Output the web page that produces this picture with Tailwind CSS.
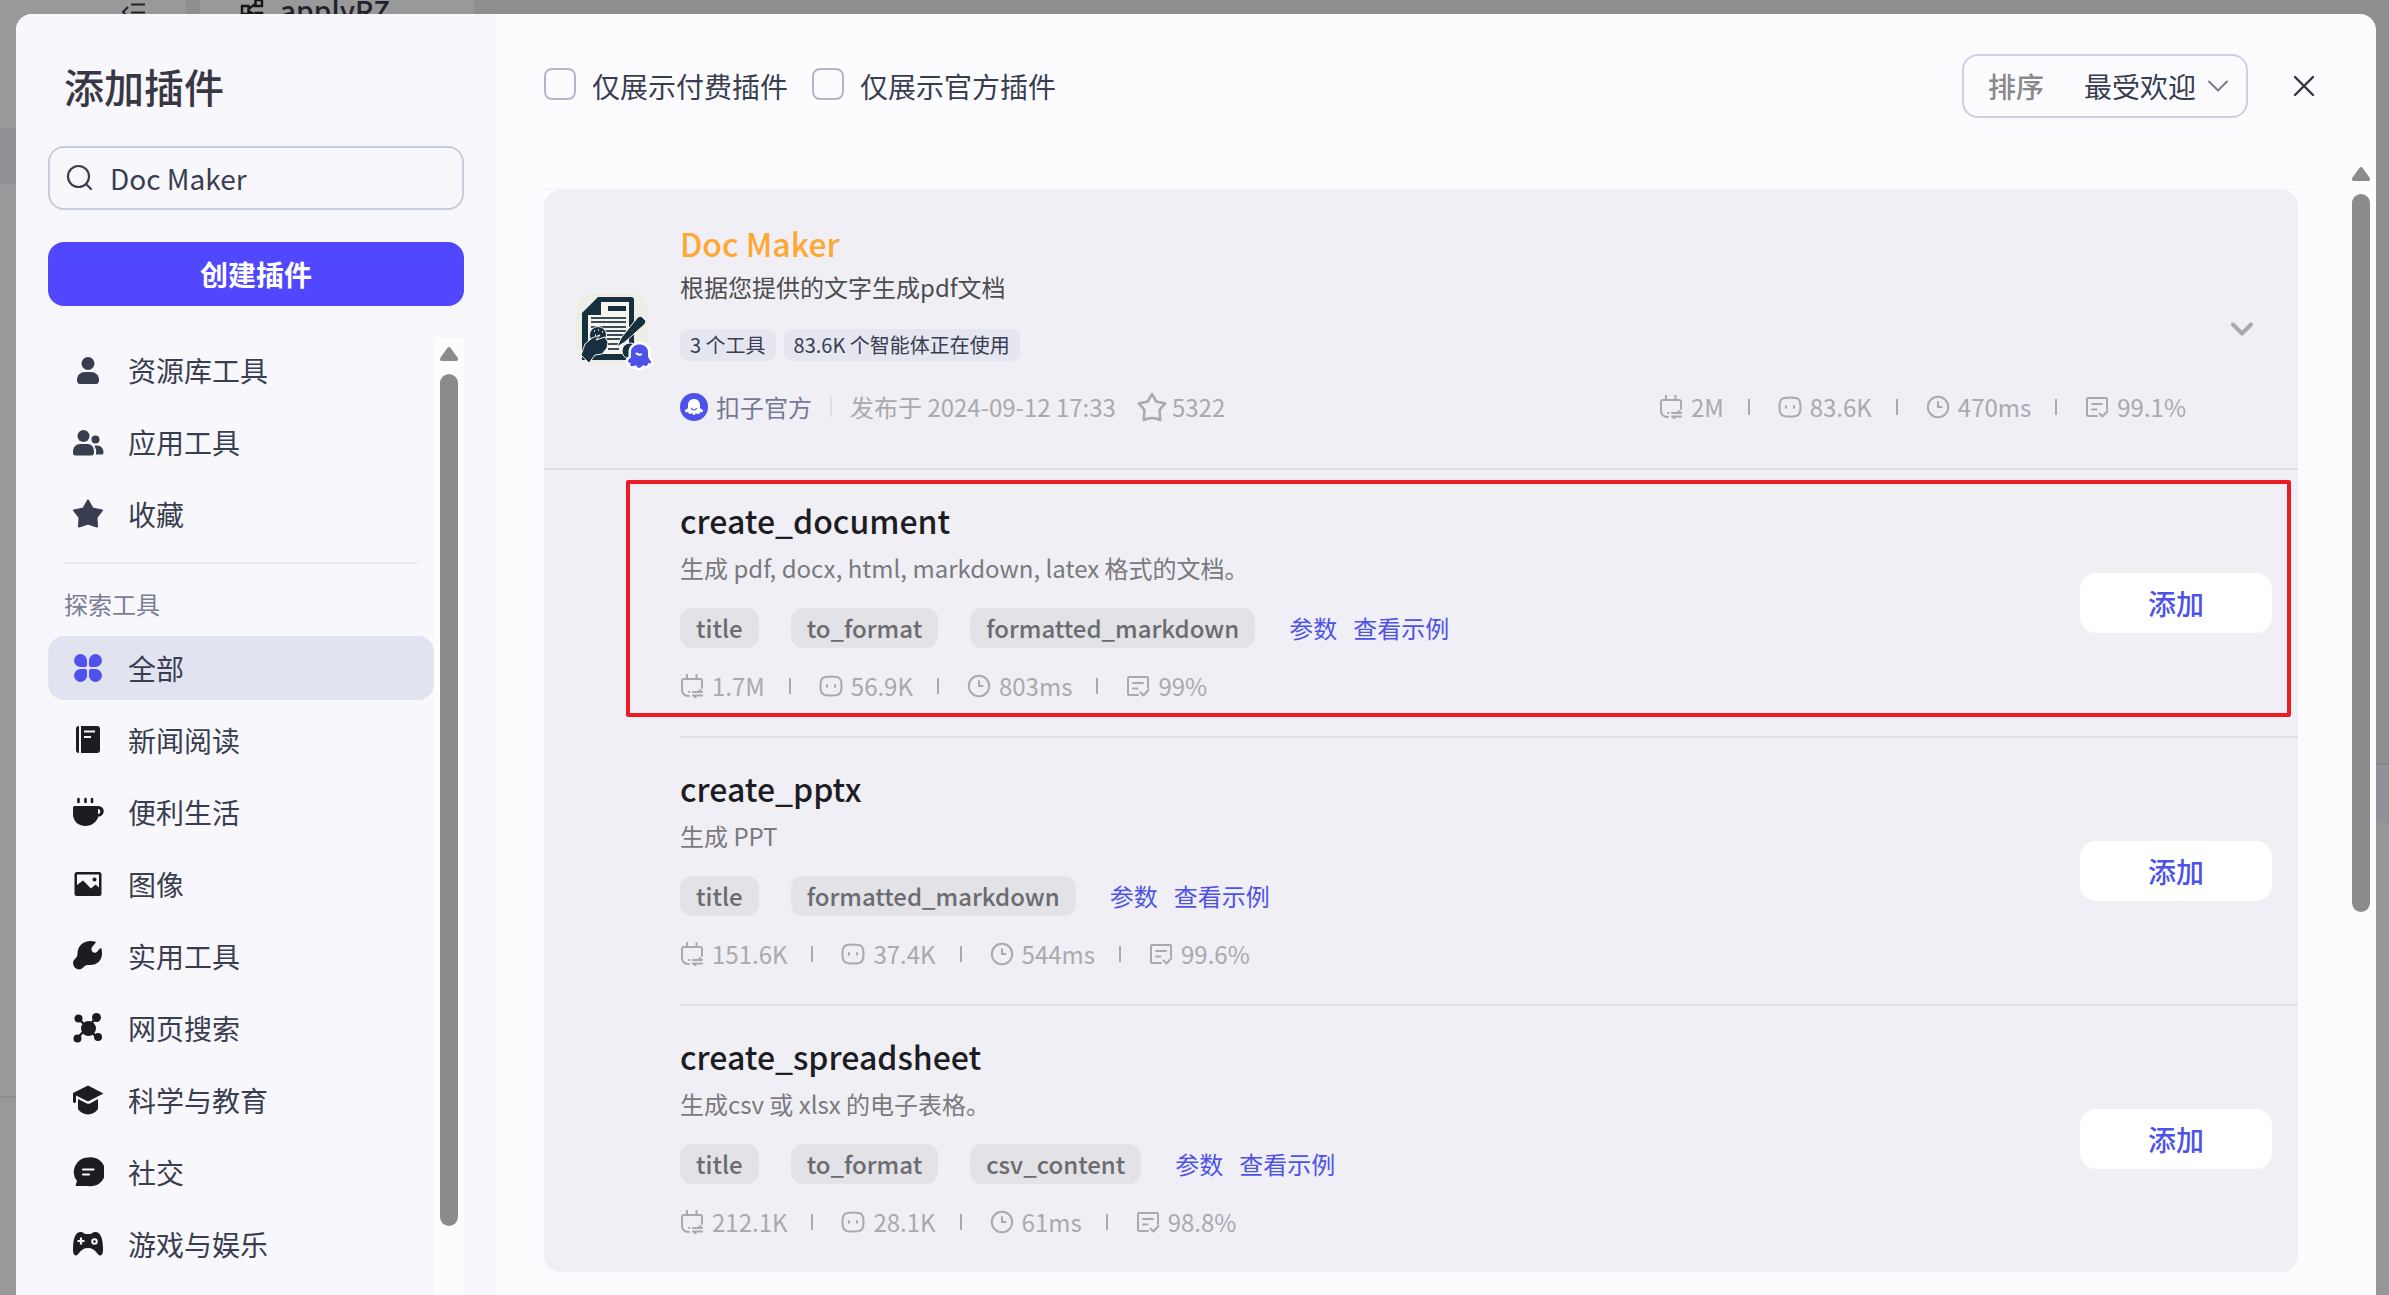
<!DOCTYPE html>
<html lang="zh-CN">
<head>
    <meta charset="UTF-8">
    <meta name="viewport" content="width=device-width, initial-scale=1.0">
    <script src="https://cdn.jsdelivr.net/npm/@tailwindcss/browser@4"></script>
    <title>添加插件</title>
</head>
<body class="relative h-screen overflow-hidden bg-[#8f8f91] font-['Noto_Sans_CJK_SC',sans-serif] text-[28px] text-[#383e50]">

    <!-- Shared icons -->
    <svg class="hidden">
        <symbol id="icon-runs" viewBox="0 0 24 24" fill="none" stroke="currentColor" stroke-width="2" stroke-linecap="round" stroke-linejoin="round">
            <path d="M7 .8V5M16.500 .8V5M9 22H8a6 6 0 0 1-6-6V7a2 2 0 0 1 2-2h16a2 2 0 0 1 2 2v7"/>
            <path d="M9 18h.5M13 18h9l-2.500-2M22 21.500h-9l2.500 1.800"/>
        </symbol>
        <symbol id="icon-bot" viewBox="0 0 24 24" fill="none" stroke="currentColor" stroke-width="2" stroke-linecap="round">
            <path d="M12 2.500c8.500 0 10.500 1.500 10.500 9.500s-2 9.500-10.500 9.500S1.500 20 1.500 12 3.500 2.500 12 2.500zM8 11v1.800M16 11v1.800"/>
        </symbol>
        <symbol id="icon-clock" viewBox="0 0 24 24" fill="none" stroke="currentColor" stroke-width="2" stroke-linecap="round" stroke-linejoin="round">
            <circle cx="12" cy="12" r="10.200"/>
            <path d="M12 7v5h3.500"/>
        </symbol>
        <symbol id="icon-rate" viewBox="0 0 24 24" fill="none" stroke="currentColor" stroke-width="2" stroke-linecap="round" stroke-linejoin="round">
            <path d="M12 21H3a1 1 0 0 1-1-1V4a1 1 0 0 1 1-1h18a1 1 0 0 1 1 1v10M7 9h10M7 14.500h4.500M14.500 18.500l3 3 5-5.500"/>
        </symbol>
        <symbol id="icon-down" viewBox="0 0 24 24" fill="none" stroke="currentColor" stroke-linecap="round" stroke-linejoin="round">
            <path d="M3 7.500l9 9 9-9"/>
        </symbol>
        <symbol id="icon-up" viewBox="0 0 18 14">
            <path fill="currentColor" d="M7.200 1.200q1.800-2.200 3.600 0l6.700 9.300q1.500 3.500-1.500 3.500H2q-3 0-1.500-3.500z"/>
        </symbol>
    </svg>

    <!-- Page behind the dialog -->
    <div class="flex h-full">
        <div class="flex w-[188px] flex-col border-r-2 border-[#8d8e93] bg-[#999]">
            <div class="flex h-32 justify-end pr-10">
                <svg class="h-6 w-6" viewBox="0 0 24 24" fill="none" stroke="#22232b" stroke-width="2"><path d="M9 4.500h14M9 12.500h14M6 7l-5 5 5 5"/></svg>
            </div>
            <div class="h-14 bg-[#8f9095]"></div>
            <div class="h-[914px] border-b-2 border-[#8d8e95]"></div>
        </div>
        <div class="flex-1 pl-3">
            <div class="flex h-5 w-[274px] items-center gap-4 bg-[#999] pl-10">
                <svg class="h-6 w-6" viewBox="0 0 24 24" fill="none" stroke="#15161c" stroke-width="2.400"><path d="M2 8h6.500v8H2zM15.500 2H22v6h-6.500zM15.500 15H22v6h-6.500zM8.500 11l7-5M8.500 13l7 4"/></svg>
                <span class="text-[28px] leading-8 font-medium text-[#20222c]">applyRZ</span>
            </div>
        </div>
        <div class="flex w-4 flex-col">
            <div class="h-[763px]"></div>
            <div class="h-[60px] border-t-2 border-[#84858c] bg-[#91919a]"></div>
            <div class="flex-1 bg-[#97979a]"></div>
        </div>
    </div>

    <!-- Dialog -->
    <div class="absolute top-[14px] right-[13px] bottom-0 left-4 flex overflow-hidden rounded-t-2xl bg-[#fcfcff]">

        <!-- Sidebar -->
        <aside class="flex w-[480px] shrink-0 flex-col bg-[#f8f8fc] px-8 pt-11">
            <h1 class="px-4 text-[40px] leading-14 font-medium text-[#383743]">添加插件</h1>
            <label class="mt-8 flex h-16 items-center gap-4 rounded-2xl border-2 border-[#c8cce0] px-4">
                <svg class="h-7 w-7 shrink-0" viewBox="0 0 28 28" fill="none" stroke="currentColor" stroke-width="2.200" stroke-linecap="round"><circle cx="12.500" cy="12.500" r="10.500"/><path d="M20 20l5 5"/></svg>
                <input type="text" value="Doc Maker" aria-label="搜索插件" class="w-full bg-transparent outline-none">
            </label>
            <button class="mt-8 h-16 shrink-0 rounded-2xl bg-[#5147ff] font-bold text-white">创建插件</button>

            <div class="mt-8 flex min-h-0 flex-1">
                <nav class="flex-1 overflow-hidden">
                    <div class="flex flex-col gap-2">
                        <a href="#" class="flex h-16 items-center gap-6 pl-6">
                            <svg class="h-8 w-8" viewBox="0 0 32 32" fill="currentColor"><circle cx="16" cy="9.500" r="6.500"/><path d="M5 26c0-5 3.500-8 8-8h6c4.500 0 8 3 8 8q0 4-3 4H8q-3 0-3-4z"/></svg>
                            资源库工具
                        </a>
                        <a href="#" class="flex h-16 items-center gap-6 pl-6">
                            <svg class="h-8 w-8" viewBox="0 0 32 32" fill="currentColor"><circle cx="11.500" cy="10" r="6"/><path d="M1 26c0-5 3-8 7-8h7.500c4 0 6.500 3 6.500 8 0 2-.5 3.500-2.500 3.500h-16C1.500 29.500 1 28 1 26z"/><circle cx="23.500" cy="13.500" r="4"/><path d="M23 19.500h2c4 0 6.500 3 6.500 7q0 2-1.500 2h-6q.8-5-1.500-9z"/></svg>
                            应用工具
                        </a>
                        <a href="#" class="flex h-16 items-center gap-6 pl-6">
                            <svg class="h-8 w-8" viewBox="0 0 32 32" fill="currentColor" stroke="currentColor" stroke-width="2" stroke-linejoin="round"><path d="M16 2.500l4.500 8 9.500 2-5.500 7 .5 9-9-3-9 3 .5-9-5.500-7 9.500-2z"/></svg>
                            收藏
                        </a>
                    </div>
                    <div class="mx-4 mt-4 border-t-2 border-[#e8e8ed]"></div>
                    <div class="mt-5 mb-3 px-4 text-2xl leading-10 text-[#7a7d96]">探索工具</div>
                    <div class="flex flex-col gap-2">
                        <a href="#" class="flex h-16 items-center gap-6 rounded-2xl bg-[#e1e4f0] pl-6">
                            <svg class="h-8 w-8" viewBox="0 0 32 32" fill="#4f52ed"><path d="M8.500 2A6.500 6.500 0 0 1 15 8.500V13q0 2-2 2H8.500a6.500 6.500 0 0 1 0-13zM23.500 2a6.500 6.500 0 0 1 0 13H19q-2 0-2-2V8.500A6.500 6.500 0 0 1 23.500 2zM8.500 17H13q2 0 2 2v4.500A6.500 6.500 0 1 1 8.500 17zM19 17h4.500a6.500 6.500 0 1 1-6.500 6.500V19q0-2 2-2z"/></svg>
                            全部
                        </a>
                        <a href="#" class="flex h-16 items-center gap-6 pl-6">
                            <svg class="h-8 w-8" viewBox="0 0 32 32" fill="#1d1c23"><path d="M7 2v27q-3 0-3-3V5q0-3 3-3zM9 2h16q3 0 3 3v21q0 3-3 3H9zM12 6.500v2h11v-2zM12 12v2h7v-2z" fill-rule="evenodd"/></svg>
                            新闻阅读
                        </a>
                        <a href="#" class="flex h-16 items-center gap-6 pl-6">
                            <svg class="h-8 w-8" viewBox="0 0 32 32" fill="#1d1c23"><path d="M6.500 3v3M13.500 3v3M20 3v3" stroke="#1d1c23" stroke-width="2.600" stroke-linecap="round"/><path d="M2.500 10h24a5 5 0 0 1 0 10.500C24.500 26 20 30 13.500 30 6 30 1 25 1 18v-6.500q0-1.500 1.500-1.500zM26 13v5c3 0 3-5 0-5z" fill-rule="evenodd"/></svg>
                            便利生活
                        </a>
                        <a href="#" class="flex h-16 items-center gap-6 pl-6">
                            <svg class="h-8 w-8" viewBox="0 0 32 32" fill="#1d1c23"><path d="M5 4h22q2.500 0 2.500 2.500v19q0 2.500-2.500 2.500H5q-2.500 0-2.500-2.500v-19Q2.500 4 5 4zM5 6.500V17l6-4.500 8 8 4.500-4 3.500 3v-13z" fill-rule="evenodd"/><circle cx="22.500" cy="11.500" r="2"/></svg>
                            图像
                        </a>
                        <a href="#" class="flex h-16 items-center gap-6 pl-6">
                            <svg class="h-8 w-8" viewBox="0 0 32 32" fill="#1d1c23"><path d="M24 2c-8-3-18 1-18.500 11 0 3-.5 4-3 6.500-4 4 1 12 6.500 9.500 3-1.500 3.500-4 7-4 9 1 14-5 14-11 0-2 0-5-1-6-2 .5-3 3.500-5 4.500-2.500 1-5-1.500-4.500-4C20 6 23 4.500 24 2z"/></svg>
                            实用工具
                        </a>
                        <a href="#" class="flex h-16 items-center gap-6 pl-6">
                            <svg class="h-8 w-8" viewBox="0 0 32 32" fill="#1d1c23"><path d="M6.500 6.500l18 18.500M24.500 5.500l-19 20.500" stroke="#1d1c23" stroke-width="2.500"/><circle cx="16.500" cy="16.500" r="7.500"/><circle cx="6.500" cy="6.500" r="4"/><circle cx="24.500" cy="5.500" r="4.500"/><circle cx="5.500" cy="26.500" r="4"/><circle cx="26" cy="25" r="4"/></svg>
                            网页搜索
                        </a>
                        <a href="#" class="flex h-16 items-center gap-6 pl-6">
                            <svg class="h-8 w-8" viewBox="0 0 32 32" fill="#1d1c23"><path d="M16 1.500l15.500 8L17 17q-1 .5-2 0L4 11.500V18q-1.500 2-3 0V9zM6 15l9 4.500q1.500.5 3 0l8-4.500v9.500c0 2-5.500 6-10 6s-10-4-10-6z"/></svg>
                            科学与教育
                        </a>
                        <a href="#" class="flex h-16 items-center gap-6 pl-6">
                            <svg class="h-8 w-8" viewBox="0 0 32 32" fill="#1d1c23"><path d="M16 1.500A14.500 14.500 0 1 1 16 30H5q-2 0-1-2l1-3A14.500 14.500 0 0 1 16 1.500z"/><path d="M11 13.500h10.500M11 18.500h6" stroke="#f8f8fc" stroke-width="2.200" stroke-linecap="round"/></svg>
                            社交
                        </a>
                        <a href="#" class="flex h-16 items-center gap-6 pl-6">
                            <svg class="h-8 w-8" viewBox="0 0 32 32" fill="#1d1c23"><path d="M8 4c3-.5 4 2 6 2h4c2 0 3-2.500 6-2 5 .5 7 8 7 17 0 4-.5 6-2.500 6.500C25 28 24.500 20 16 20S7 28 3.500 27.500C1.500 27 1 25 1 21 1 12 3 4.500 8 4z"/><path d="M9 9.500v7M5.500 13h7" stroke="#f8f8fc" stroke-width="2.200"/><circle cx="22.500" cy="13.500" r="2.300" fill="none" stroke="#f8f8fc" stroke-width="2"/></svg>
                            游戏与娱乐
                        </a>
                    </div>
                </nav>
                <!-- Sidebar scrollbar -->
                <div class="flex w-[30px] flex-col items-center bg-[#fcfcfc] pt-[9px]">
                    <svg class="h-[14px] w-[18px] text-[#8b8b8b]"><use href="#icon-up"/></svg>
                    <div class="mt-[13px] h-[852px] w-[18px] shrink-0 rounded-full bg-[#8b8b8b]"></div>
                </div>
            </div>
        </aside>

        <!-- Content -->
        <main class="flex min-w-0 flex-1 flex-col">
            <header class="flex items-center justify-between pt-10 pr-14 pl-12">
                <div class="flex items-center gap-6">
                    <label class="flex items-start gap-4">
                        <input type="checkbox" class="mt-[3px] h-8 w-8 appearance-none rounded-lg border-2 border-[#b4b5cb]">
                        仅展示付费插件
                    </label>
                    <label class="flex items-start gap-4">
                        <input type="checkbox" class="mt-[3px] h-8 w-8 appearance-none rounded-lg border-2 border-[#b4b5cb]">
                        仅展示官方插件
                    </label>
                </div>
                <div class="flex items-center gap-10">
                    <label class="flex h-16 items-center rounded-2xl border-2 border-[#ccd0e4] pr-4 pl-6">
                        <span class="mr-10 font-medium text-[#89888f]">排序</span>
                        <select class="appearance-none bg-transparent outline-none">
                            <option>最受欢迎</option>
                        </select>
                        <svg class="ml-[9px] h-6 w-6 text-[#7b7b84]" stroke-width="2"><use href="#icon-down"/></svg>
                    </label>
                    <button aria-label="关闭" class="flex h-8 w-8 items-center justify-center">
                        <svg class="h-6 w-6" viewBox="0 0 24 24" fill="none" stroke="#2f3345" stroke-width="2.400" stroke-linecap="round"><path d="M3 3l18 18M21 3L3 21"/></svg>
                    </button>
                </div>
            </header>

            <div class="mt-[42px] flex min-h-0 flex-1">
                <div class="min-w-0 flex-1 pt-7 pr-12 pl-12">
                    <div class="border-t-2 border-[#f7f7f9]">
                        <div class="rounded-2xl bg-[#f0eff5]">

                            <!-- Plugin summary -->
                            <section class="flex items-center border-b-2 border-[#dedee2] pr-10 pl-8">
                                <div class="relative mr-8 h-[72px] w-[72px] shrink-0">
                                    <svg class="h-full w-full rounded-2xl" viewBox="0 0 72 72">
                                        <rect width="72" height="72" fill="#eeeee6"/>
                                        <path fill="#17303f" d="M22 4h33q3 0 3 3v60H6V20z"/>
                                        <path fill="#f6f5ef" d="M25 9h28v52H12V22h13z"/>
                                        <path fill="#17303f" d="M32 13h18v5H32z"/>
                                        <path d="M15 25h35M15 29h35M15 34h35M24 38h26M28 42h20M30 46h14M31 51h12M32 56h11" stroke="#3a4d58" stroke-width="2"/>
                                        <circle cx="22" cy="42" r="8.500" fill="#17303f" stroke="#f6f5ef"/>
                                        <path d="M18 38h1M22 37h1M26 39h1M19 42h1" stroke="#f6f5ef" stroke-width="1.500"/>
                                        <path fill="#17303f" stroke="#f6f5ef" d="M5 62l4-11 7-6 8-3-4 5 9-3 3 5-1 6-5 6-7 1-6 8z"/>
                                        <path fill="#17303f" stroke="#f6f5ef" d="M62 24l3-1 5 5-1 3-20 18-8 5 4-9z"/>
                                        <circle cx="54" cy="58" r="8" fill="#17303f" stroke="#f6f5ef"/>
                                    </svg>
                                    <svg class="absolute -right-2 -bottom-2 h-8 w-8" viewBox="0 0 32 32">
                                        <path fill="#4d53e8" stroke="#fff" stroke-width="5" stroke-linejoin="round" paint-order="stroke" d="M7 11c0-10 17-10 17 0v4c0 3 4 5 3 7-1 1-3 0-3 0s0 3-2 3-3-1-3-1-2 3-4 3-3-3-3-3-3 2-5 1 0-3 0-3-3 0-3-2 2-2 3-4z"/>
                                        <path d="M12 12q3 3 6 1" stroke="#fff" stroke-width="2" fill="none"/>
                                    </svg>
                                </div>
                                <div class="min-w-0 flex-1 pt-[31px] pb-[45px]">
                                    <h2 class="text-[32px] leading-11 font-medium text-[#ffa733]">Doc Maker</h2>
                                    <p class="text-2xl leading-11 text-[#4d4d50]">根据您提供的文字生成pdf文档</p>
                                    <div class="mt-5 flex gap-2 text-xl leading-8">
                                        <span class="rounded-lg bg-[#e6e6f0] px-[10px]">3 个工具</span>
                                        <span class="rounded-lg bg-[#e6e6f0] px-[10px]">83.6K 个智能体正在使用</span>
                                    </div>
                                    <div class="mt-[30px] flex items-center justify-between text-2xl leading-8 text-[#a9a9ae]">
                                        <div class="flex items-center">
                                            <svg class="mr-2 h-7 w-7" viewBox="0 0 28 28"><circle cx="14" cy="14" r="14" fill="#4d53e8"/><path fill="#fff" d="M8 12c0-8 12-8 12 0v3c0 1 3 1 3 3s-3 1-3 1 0 2-2 2-2-1-2-1-1 2-2 2-2-2-2-2-1 1-2 1-2-2-2-2-3 1-3-1 3-2 3-3z"/><path d="M11 15q3 4 6 0" stroke="#4d53e8" stroke-width="1.200" fill="none"/></svg>
                                            <span class="text-[#737a94]">扣子官方</span>
                                            <span class="mx-[18px] h-5 w-[2px] bg-[#dcdce3]"></span>
                                            <span>发布于 2024-09-12 17:33</span>
                                            <svg class="mr-1 ml-5 h-8 w-8" viewBox="0 0 32 32" fill="none" stroke="currentColor" stroke-width="2.600" stroke-linejoin="round"><path d="M16 3l4.200 7.500 9 2q-3.500 3-5.700 7l.8 9.500q-8-4-16.600 0l.8-9.500q-2.200-4-5.700-7l9-2z"/></svg>
                                            <span>5322</span>
                                        </div>
                                        <div class="flex items-center">
                                            <svg class="mr-2 h-6 w-6"><use href="#icon-runs"/></svg>2M
                                            <span class="mr-7 ml-6 h-4 w-[2px] bg-[#a9a9ae]"></span>
                                            <svg class="mr-2 h-6 w-6"><use href="#icon-bot"/></svg>83.6K
                                            <span class="mr-7 ml-6 h-4 w-[2px] bg-[#a9a9ae]"></span>
                                            <svg class="mr-2 h-6 w-6"><use href="#icon-clock"/></svg>470ms
                                            <span class="mr-7 ml-6 h-4 w-[2px] bg-[#a9a9ae]"></span>
                                            <svg class="mr-2 h-6 w-6"><use href="#icon-rate"/></svg>99.1%
                                        </div>
                                    </div>
                                </div>
                                <button aria-label="收起" class="ml-10 flex h-8 w-8 items-center justify-center text-[#a9a9ae]">
                                    <svg class="h-6 w-6" stroke-width="4"><use href="#icon-down"/></svg>
                                </button>
                            </section>

                            <!-- Tools -->
                            <section class="relative ml-[136px] flex items-center justify-between border-b-2 border-[#dfdfe4] pr-[26px]">
                                <div class="absolute top-[10px] right-[7px] bottom-[19px] -left-[54px] rounded-xs border-4 border-[#ed1c24]"></div>
                                <div class="pt-7 pb-[34px]">
                                    <h3 class="text-[32px] leading-11 font-medium text-[#1d1c23]">create_document</h3>
                                    <p class="mt-1 text-2xl leading-11 text-[#79797e]">生成 pdf, docx, html, markdown, latex 格式的文档。</p>
                                    <div class="mt-[18px] flex items-center gap-8 text-2xl leading-10">
                                        <span class="rounded-xl bg-[#e2e2e7] px-4 font-medium text-[#6b6b70]">title</span>
                                        <span class="rounded-xl bg-[#e2e2e7] px-4 font-medium text-[#6b6b70]">to_format</span>
                                        <span class="rounded-xl bg-[#e2e2e7] px-4 font-medium text-[#6b6b70]">formatted_markdown</span>
                                        <div class="flex gap-4 pl-[2px] text-[#4d53e8]"><a href="#">参数</a><a href="#">查看示例</a></div>
                                    </div>
                                    <div class="mt-[22px] flex items-center text-2xl leading-8 text-[#a9a9ae]">
                                        <svg class="mr-2 h-6 w-6"><use href="#icon-runs"/></svg>1.7M
                                        <span class="mr-7 ml-6 h-4 w-[2px] bg-[#a9a9ae]"></span>
                                        <svg class="mr-2 h-6 w-6"><use href="#icon-bot"/></svg>56.9K
                                        <span class="mr-7 ml-6 h-4 w-[2px] bg-[#a9a9ae]"></span>
                                        <svg class="mr-2 h-6 w-6"><use href="#icon-clock"/></svg>803ms
                                        <span class="mr-7 ml-6 h-4 w-[2px] bg-[#a9a9ae]"></span>
                                        <svg class="mr-2 h-6 w-6"><use href="#icon-rate"/></svg>99%
                                    </div>
                                </div>
                                <button class="h-[60px] w-48 rounded-2xl bg-white font-medium text-[#4d53e8]">添加</button>
                            </section>

                            <section class="ml-[136px] flex items-center justify-between border-b-2 border-[#dfdfe4] pr-[26px]">
                                <div class="pt-7 pb-[34px]">
                                    <h3 class="text-[32px] leading-11 font-medium text-[#1d1c23]">create_pptx</h3>
                                    <p class="mt-1 text-2xl leading-11 text-[#79797e]">生成 PPT</p>
                                    <div class="mt-[18px] flex items-center gap-8 text-2xl leading-10">
                                        <span class="rounded-xl bg-[#e2e2e7] px-4 font-medium text-[#6b6b70]">title</span>
                                        <span class="rounded-xl bg-[#e2e2e7] px-4 font-medium text-[#6b6b70]">formatted_markdown</span>
                                        <div class="flex gap-4 pl-[2px] text-[#4d53e8]"><a href="#">参数</a><a href="#">查看示例</a></div>
                                    </div>
                                    <div class="mt-[22px] flex items-center text-2xl leading-8 text-[#a9a9ae]">
                                        <svg class="mr-2 h-6 w-6"><use href="#icon-runs"/></svg>151.6K
                                        <span class="mr-7 ml-6 h-4 w-[2px] bg-[#a9a9ae]"></span>
                                        <svg class="mr-2 h-6 w-6"><use href="#icon-bot"/></svg>37.4K
                                        <span class="mr-7 ml-6 h-4 w-[2px] bg-[#a9a9ae]"></span>
                                        <svg class="mr-2 h-6 w-6"><use href="#icon-clock"/></svg>544ms
                                        <span class="mr-7 ml-6 h-4 w-[2px] bg-[#a9a9ae]"></span>
                                        <svg class="mr-2 h-6 w-6"><use href="#icon-rate"/></svg>99.6%
                                    </div>
                                </div>
                                <button class="h-[60px] w-48 rounded-2xl bg-white font-medium text-[#4d53e8]">添加</button>
                            </section>

                            <section class="ml-[136px] flex items-center justify-between pr-[26px]">
                                <div class="pt-7 pb-[34px]">
                                    <h3 class="text-[32px] leading-11 font-medium text-[#1d1c23]">create_spreadsheet</h3>
                                    <p class="mt-1 text-2xl leading-11 text-[#79797e]">生成csv 或 xlsx 的电子表格。</p>
                                    <div class="mt-[18px] flex items-center gap-8 text-2xl leading-10">
                                        <span class="rounded-xl bg-[#e2e2e7] px-4 font-medium text-[#6b6b70]">title</span>
                                        <span class="rounded-xl bg-[#e2e2e7] px-4 font-medium text-[#6b6b70]">to_format</span>
                                        <span class="rounded-xl bg-[#e2e2e7] px-4 font-medium text-[#6b6b70]">csv_content</span>
                                        <div class="flex gap-4 pl-[2px] text-[#4d53e8]"><a href="#">参数</a><a href="#">查看示例</a></div>
                                    </div>
                                    <div class="mt-[22px] flex items-center text-2xl leading-8 text-[#a9a9ae]">
                                        <svg class="mr-2 h-6 w-6"><use href="#icon-runs"/></svg>212.1K
                                        <span class="mr-7 ml-6 h-4 w-[2px] bg-[#a9a9ae]"></span>
                                        <svg class="mr-2 h-6 w-6"><use href="#icon-bot"/></svg>28.1K
                                        <span class="mr-7 ml-6 h-4 w-[2px] bg-[#a9a9ae]"></span>
                                        <svg class="mr-2 h-6 w-6"><use href="#icon-clock"/></svg>61ms
                                        <span class="mr-7 ml-6 h-4 w-[2px] bg-[#a9a9ae]"></span>
                                        <svg class="mr-2 h-6 w-6"><use href="#icon-rate"/></svg>98.8%
                                    </div>
                                </div>
                                <button class="h-[60px] w-48 rounded-2xl bg-white font-medium text-[#4d53e8]">添加</button>
                            </section>
                        </div>
                    </div>
                </div>
                <!-- Content scrollbar -->
                <div class="flex w-[30px] flex-col items-center bg-[#fcfcfc] pt-[7px]">
                    <svg class="h-[14px] w-[18px] text-[#8b8b8b]"><use href="#icon-up"/></svg>
                    <div class="mt-[13px] h-[718px] w-[18px] shrink-0 rounded-full bg-[#8b8b8b]"></div>
                </div>
            </div>
        </main>
    </div>
</body>
</html>
